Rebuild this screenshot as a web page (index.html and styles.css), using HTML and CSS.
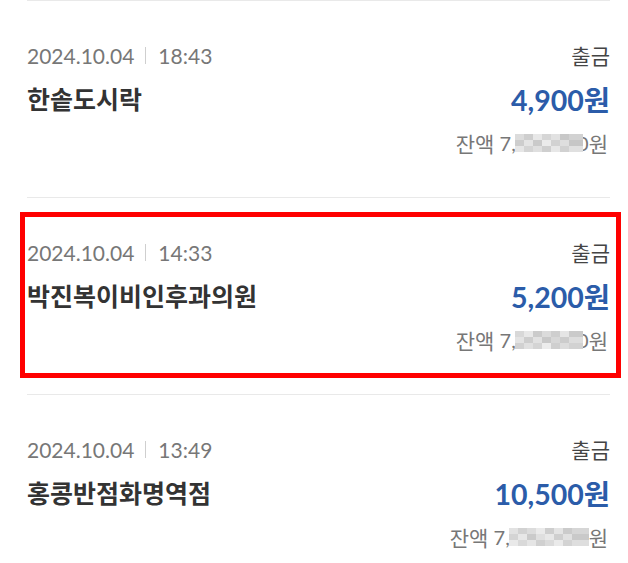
FILE: index.html
```html
<!DOCTYPE html>
<html lang="ko">
<head>
<meta charset="utf-8">
<link rel="stylesheet" href="styles.css">
</head>
<body>
<ul class="tx-list">
  <li class="tx">
    <div class="row row-top">
      <span class="date">2024.10.04<span class="sep"></span>18:43</span>
      <span class="kind">출금</span>
    </div>
    <div class="row row-mid">
      <span class="name">한솥도시락</span>
      <span class="amount">4,900원</span>
    </div>
    <div class="row row-bot">
      <span class="balance"><span class="ko">잔액</span>&nbsp;7,<svg class="mosaic" width="68" height="18" viewBox="0 0 68 18"><rect x="0" y="0" width="9" height="6" fill="#dcdcdc"/><rect x="9" y="0" width="9" height="6" fill="#cecece"/><rect x="18" y="0" width="9" height="6" fill="#e8e8e8"/><rect x="27" y="0" width="9" height="6" fill="#d6d6d6"/><rect x="36" y="0" width="9" height="6" fill="#e2e2e2"/><rect x="45" y="0" width="9" height="6" fill="#c8c8c8"/><rect x="54" y="0" width="14" height="6" fill="#d2d2d2"/><rect x="0" y="6" width="9" height="6" fill="#cdcdcd"/><rect x="9" y="6" width="9" height="6" fill="#e4e4e4"/><rect x="18" y="6" width="9" height="6" fill="#cacaca"/><rect x="27" y="6" width="9" height="6" fill="#ebebeb"/><rect x="36" y="6" width="9" height="6" fill="#d2d2d2"/><rect x="45" y="6" width="9" height="6" fill="#dedede"/><rect x="54" y="6" width="14" height="6" fill="#c6c6c6"/><rect x="0" y="12" width="9" height="6" fill="#e6e6e6"/><rect x="9" y="12" width="9" height="6" fill="#d4d4d4"/><rect x="18" y="12" width="9" height="6" fill="#dfdfdf"/><rect x="27" y="12" width="9" height="6" fill="#cfcfcf"/><rect x="36" y="12" width="9" height="6" fill="#e7e7e7"/><rect x="45" y="12" width="9" height="6" fill="#d1d1d1"/><rect x="54" y="12" width="14" height="6" fill="#e0e0e0"/></svg><span class="cut">0</span><span class="ko">원</span></span>
    </div>
  </li>
  <li class="tx">
    <div class="row row-top">
      <span class="date">2024.10.04<span class="sep"></span>14:33</span>
      <span class="kind">출금</span>
    </div>
    <div class="row row-mid">
      <span class="name">박진복이비인후과의원</span>
      <span class="amount">5,200원</span>
    </div>
    <div class="row row-bot">
      <span class="balance"><span class="ko">잔액</span>&nbsp;7,<svg class="mosaic" width="68" height="18" viewBox="0 0 68 18"><rect x="0" y="0" width="9" height="6" fill="#d8d8d8"/><rect x="9" y="0" width="9" height="6" fill="#e8e8e8"/><rect x="18" y="0" width="9" height="6" fill="#cbcbcb"/><rect x="27" y="0" width="9" height="6" fill="#dbdbdb"/><rect x="36" y="0" width="9" height="6" fill="#cecece"/><rect x="45" y="0" width="9" height="6" fill="#e5e5e5"/><rect x="54" y="0" width="14" height="6" fill="#cacaca"/><rect x="0" y="6" width="9" height="6" fill="#e3e3e3"/><rect x="9" y="6" width="9" height="6" fill="#cdcdcd"/><rect x="18" y="6" width="9" height="6" fill="#e1e1e1"/><rect x="27" y="6" width="9" height="6" fill="#c8c8c8"/><rect x="36" y="6" width="9" height="6" fill="#d7d7d7"/><rect x="45" y="6" width="9" height="6" fill="#cccccc"/><rect x="54" y="6" width="14" height="6" fill="#dddddd"/><rect x="0" y="12" width="9" height="6" fill="#d1d1d1"/><rect x="9" y="12" width="9" height="6" fill="#e0e0e0"/><rect x="18" y="12" width="9" height="6" fill="#d4d4d4"/><rect x="27" y="12" width="9" height="6" fill="#ececec"/><rect x="36" y="12" width="9" height="6" fill="#cfcfcf"/><rect x="45" y="12" width="9" height="6" fill="#dcdcdc"/><rect x="54" y="12" width="14" height="6" fill="#d2d2d2"/></svg><span class="cut">0</span><span class="ko">원</span></span>
    </div>
    <div class="highlight"></div>
  </li>
  <li class="tx">
    <div class="row row-top">
      <span class="date">2024.10.04<span class="sep"></span>13:49</span>
      <span class="kind">출금</span>
    </div>
    <div class="row row-mid">
      <span class="name">홍콩반점화명역점</span>
      <span class="amount">10,500원</span>
    </div>
    <div class="row row-bot">
      <span class="balance"><span class="ko">잔액</span>&nbsp;7,<svg class="mosaic" width="80" height="18" viewBox="0 0 80 18"><rect x="0" y="0" width="9" height="6" fill="#e2e2e2"/><rect x="9" y="0" width="9" height="6" fill="#d2d2d2"/><rect x="18" y="0" width="9" height="6" fill="#dcdcdc"/><rect x="27" y="0" width="9" height="6" fill="#eaeaea"/><rect x="36" y="0" width="9" height="6" fill="#cecece"/><rect x="45" y="0" width="9" height="6" fill="#e4e4e4"/><rect x="54" y="0" width="9" height="6" fill="#cbcbcb"/><rect x="63" y="0" width="17" height="6" fill="#d6d6d6"/><rect x="0" y="6" width="9" height="6" fill="#d4d4d4"/><rect x="9" y="6" width="9" height="6" fill="#e7e7e7"/><rect x="18" y="6" width="9" height="6" fill="#cacaca"/><rect x="27" y="6" width="9" height="6" fill="#dfdfdf"/><rect x="36" y="6" width="9" height="6" fill="#e8e8e8"/><rect x="45" y="6" width="9" height="6" fill="#cfcfcf"/><rect x="54" y="6" width="9" height="6" fill="#e1e1e1"/><rect x="63" y="6" width="17" height="6" fill="#c9c9c9"/><rect x="0" y="12" width="9" height="6" fill="#e9e9e9"/><rect x="9" y="12" width="9" height="6" fill="#d9d9d9"/><rect x="18" y="12" width="9" height="6" fill="#e5e5e5"/><rect x="27" y="12" width="9" height="6" fill="#d0d0d0"/><rect x="36" y="12" width="9" height="6" fill="#dbdbdb"/><rect x="45" y="12" width="9" height="6" fill="#eaeaea"/><rect x="54" y="12" width="9" height="6" fill="#d3d3d3"/><rect x="63" y="12" width="17" height="6" fill="#dedede"/></svg><span class="ko">원</span></span>
    </div>
  </li>
</ul>
</body>
</html>
```

FILE: styles.css
```css
* { box-sizing: border-box; }
html, body {
  margin: 0;
  padding: 0;
  background: #ffffff;
}
body {
  font-family: Lato, "Noto Sans CJK KR", sans-serif;
  overflow: hidden;
}
.tx-list {
  list-style: none;
  margin: 0 18px 0 27px;
  padding: 0;
}
.tx {
  position: relative;
  height: 197px;
  border-top: 1px solid #e9e9e9;
  padding-top: 39px;
}
.row {
  display: flex;
  justify-content: space-between;
  align-items: center;
}
.row-top { height: 30px; }
.row-mid { height: 34px; margin-top: 11px; }
.row-bot { height: 28px; margin-top: 14px; justify-content: flex-end; }
.date {
  font-size: 21px;
  color: #777777;
  display: inline-flex;
  align-items: center;
}
.sep {
  display: inline-block;
  width: 1px;
  height: 17px;
  background: #cfcfcf;
  margin: 0 12px 0 11px;
}
.kind {
  font-size: 21px;
  color: #444444;
  font-family: "Noto Sans CJK KR", sans-serif;
}
.name {
  font-size: 25px;
  font-weight: 700;
  color: #333333;
  font-family: "Noto Sans CJK KR", sans-serif;
}
.amount {
  font-size: 28.5px;
  font-weight: 700;
  color: #2b5ca9;
}
.balance {
  font-size: 20px;
  color: #777777;
  display: inline-flex;
  align-items: center;
  padding-right: 2px;
}
.ko {
  font-family: "Noto Sans CJK KR", sans-serif;
  font-size: 21px;
}
.mosaic {
  display: block;
  margin-left: -1px;
}
.cut {
  display: inline-block;
  width: 6px;
  overflow: hidden;
  direction: rtl;
}
.highlight {
  position: absolute;
  left: -7px;
  right: -11px;
  top: 14px;
  height: 166px;
  border: 5px solid #ff0000;
  pointer-events: none;
}
```
